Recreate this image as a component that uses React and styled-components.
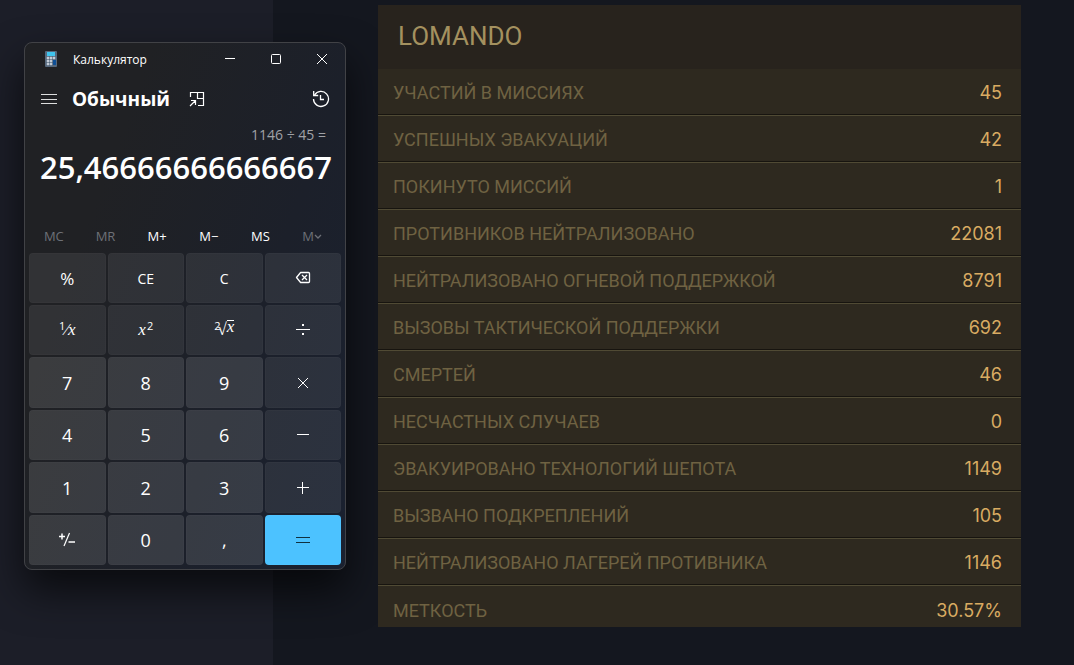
import React from 'react';
import styled, { createGlobalStyle } from 'styled-components';

const stats = [
  ['УЧАСТИЙ В МИССИЯХ', '45'],
  ['УСПЕШНЫХ ЭВАКУАЦИЙ', '42'],
  ['ПОКИНУТО МИССИЙ', '1'],
  ['ПРОТИВНИКОВ НЕЙТРАЛИЗОВАНО', '22081'],
  ['НЕЙТРАЛИЗОВАНО ОГНЕВОЙ ПОДДЕРЖКОЙ', '8791'],
  ['ВЫЗОВЫ ТАКТИЧЕСКОЙ ПОДДЕРЖКИ', '692'],
  ['СМЕРТЕЙ', '46'],
  ['НЕСЧАСТНЫХ СЛУЧАЕВ', '0'],
  ['ЭВАКУИРОВАНО ТЕХНОЛОГИЙ ШЕПОТА', '1149'],
  ['ВЫЗВАНО ПОДКРЕПЛЕНИЙ', '105'],
  ['НЕЙТРАЛИЗОВАНО ЛАГЕРЕЙ ПРОТИВНИКА', '1146'],
  ['МЕТКОСТЬ', '30.57%'],
];

const memoryKeys = [
  { label: 'MC', disabled: true },
  { label: 'MR', disabled: true },
  { label: 'M+' },
  { label: 'M−' },
  { label: 'MS' },
  { label: 'M', disabled: true, arrow: true },
];

const Glyph = ({ size = 16, children }) => (
  <svg width={size} height={size} viewBox={`0 0 ${size} ${size}`} fill="none" stroke="currentColor" aria-hidden="true">
    {children}
  </svg>
);

const SFormula = styled.span`
  display: flex;
  align-items: center;
  gap: ${({ $gap }) => $gap || '0'};
  font-family: 'Liberation Serif', serif;
  font-size: 17px;
  sup {
    align-self: flex-start;
    font-family: 'Open Sans', sans-serif;
    font-size: 11px;
    line-height: 12px;
  }
`;
const SRoot = styled.span`
  display: flex;
  margin-left: -3px;
  i {
    border-top: 1px solid currentColor;
    line-height: 12px;
  }
`;

const keys = [
  { name: 'Процент', label: '%' },
  { name: 'Очистить запись', label: 'CE', small: true },
  { name: 'Очистить', label: 'C', small: true },
  {
    name: 'Backspace',
    label: (
      <Glyph>
        <path d="M5.6 2.5h7.900a1 1 0 0 1 1 1v8a1 1 0 0 1-1 1H5.600L1.500 7.500z" strokeWidth="1.3" strokeLinejoin="round" />
        <path d="M7 5l5 5M12 5l-5 5" strokeWidth="1.3" />
      </Glyph>
    ),
  },
  {
    name: 'Обратное число',
    label: (
      <SFormula>
        <sup>1</sup>⁄<i>x</i>
      </SFormula>
    ),
  },
  {
    name: 'Квадрат',
    label: (
      <SFormula $gap="1px">
        <i>x</i>
        <sup>2</sup>
      </SFormula>
    ),
  },
  {
    name: 'Квадратный корень',
    label: (
      <SFormula>
        <sup>2</sup>
        <SRoot>
          √<i>x</i>
        </SRoot>
      </SFormula>
    ),
  },
  {
    name: 'Разделить',
    label: (
      <Glyph>
        <path d="M1 7.5h14" />
        <path d="M7 2h2v2H7zM7 11h2v2H7z" fill="currentColor" stroke="none" />
      </Glyph>
    ),
  },
  { name: '7', label: '7', digit: true },
  { name: '8', label: '8', digit: true },
  { name: '9', label: '9', digit: true },
  {
    name: 'Умножить',
    label: (
      <Glyph>
        <path d="M3 3l10 10M13 3L3 13" />
      </Glyph>
    ),
  },
  { name: '4', label: '4', digit: true },
  { name: '5', label: '5', digit: true },
  { name: '6', label: '6', digit: true },
  {
    name: 'Вычесть',
    label: (
      <Glyph>
        <path d="M2 7.5h12" />
      </Glyph>
    ),
  },
  { name: '1', label: '1', digit: true },
  { name: '2', label: '2', digit: true },
  { name: '3', label: '3', digit: true },
  {
    name: 'Сложить',
    label: (
      <Glyph>
        <path d="M2 7.5h12M7.5 2v12" />
      </Glyph>
    ),
  },
  {
    name: 'Сменить знак',
    digit: true,
    label: (
      <Glyph>
        <path d="M0 4.5h6M3 1.5v6" strokeWidth="1.5" />
        <path d="M10.5 1L5 14" strokeWidth="1.2" />
        <path d="M9.5 10h6.5" strokeWidth="1.5" />
      </Glyph>
    ),
  },
  { name: '0', label: '0', digit: true },
  { name: 'Запятая', label: ',', digit: true },
  {
    name: 'Равно',
    equals: true,
    label: (
      <Glyph>
        <path d="M1 5.5h14M1 10.5h14" />
      </Glyph>
    ),
  },
];

const Calculator = () => {
  return (
    <SWindow>
      <STitleBar>
        <svg width="12" height="16" viewBox="0 0 12 16" aria-hidden="true">
          <rect width="12" height="16" rx="1" fill="#56687c" />
          <rect x="2" y="1" width="8" height="4" fill="#3fc4ee" />
          <path
            d="M2 6h2v2H2zM5 6h2v2H5zM8 6h2v2H8zM2 9h2v2H2zM5 9h2v2H5zM2 12h2v2H2zM5 12h2v2H5z"
            fill="#cfd6df"
            stroke="#b3bdc9"
            strokeWidth="0.5"
          />
          <path d="M8 9h3v5H8z" fill="#0e4f96" />
        </svg>
        <STitle>Калькулятор</STitle>
        <SCaptionButton aria-label="Свернуть">
          <Glyph size={12}>
            <path d="M1 5.5h10" />
          </Glyph>
        </SCaptionButton>
        <SCaptionButton aria-label="Развернуть">
          <Glyph size={12}>
            <rect x="1.5" y="1.5" width="9" height="9" rx="1" />
          </Glyph>
        </SCaptionButton>
        <SCaptionButton aria-label="Закрыть">
          <Glyph size={12}>
            <path d="M1 1l10 10M11 1L1 11" />
          </Glyph>
        </SCaptionButton>
      </STitleBar>
      <SModeBar>
        <SIconButton aria-label="Меню">
          <Glyph>
            <path d="M0 3.5h16M0 8.5h16M0 12.5h16" opacity="0.85" />
          </Glyph>
        </SIconButton>
        <SMode>Обычный</SMode>
        <SIconButton aria-label="Поверх остальных окон">
          <Glyph>
            <path d="M1.5 6V1.5h13v13H9M8.5 1.5v6h6M1 15l5.5-5.5M2 9.5h4.500V14" strokeWidth="1.2" />
          </Glyph>
        </SIconButton>
        <SHistoryButton aria-label="Журнал">
          <Glyph size={18}>
            <path d="M2.5 5.2a7.5 7.5 0 1 1-1 3.8" strokeWidth="1.3" />
            <path d="M1.7 1v4.500h4.500M8.5 5v4.500H12" strokeWidth="1.3" />
          </Glyph>
        </SHistoryButton>
      </SModeBar>
      <SExpression>1146 ÷ 45 =</SExpression>
      <SResult>25,46666666666667</SResult>
      <SMemory>
        {memoryKeys.map(key => {
          return (
            <SMemoryKey key={key.label} disabled={key.disabled}>
              {key.label}
              {key.arrow && (
                <Glyph size={8}>
                  <path d="M1 3l3 3 3-3" strokeWidth="1.3" />
                </Glyph>
              )}
            </SMemoryKey>
          );
        })}
      </SMemory>
      <SKeypad>
        {keys.map(key => {
          return (
            <SKey key={key.name} aria-label={key.name} $digit={key.digit} $small={key.small} $equals={key.equals}>
              {key.label}
            </SKey>
          );
        })}
      </SKeypad>
    </SWindow>
  );
};

const Stats = () => {
  return (
    <SStats>
      <SPlayer>LOMANDO</SPlayer>
      <STable>
        <tbody>
          {stats.map(([label, value]) => {
            return (
              <tr key={label}>
                <SLabel scope="row">{label}</SLabel>
                <SValue>{value}</SValue>
              </tr>
            );
          })}
        </tbody>
      </STable>
    </SStats>
  );
};

const App = () => {
  return (
    <>
      <GlobalStyle />
      <SPage>
        <Calculator />
        <Stats />
      </SPage>
    </>
  );
};

export default App;

const GlobalStyle = createGlobalStyle`
  * {
    box-sizing: border-box;
  }
  body {
    margin: 0;
    background: #14171f;
    font-family: 'Open Sans', 'Noto Sans', sans-serif;
  }
  button {
    padding: 0;
    border: 0;
    background: none;
    color: inherit;
    font: inherit;
  }
  svg {
    display: block;
  }
`;
const SPage = styled.main`
  display: flex;
  align-items: flex-start;
  gap: 32px;
  min-height: 100vh;
  padding: 5px 53px 0 24px;
  background: linear-gradient(to right, #1c1e28 273px, #14171f 273px);
`;
const SWindow = styled.section`
  flex: 0 0 322px;
  margin-top: 37px;
  padding: 0 4px 4px;
  border: 1px solid #414246;
  border-radius: 8px;
  background: linear-gradient(110deg, #202124 25%, #1c202a 65%, #1a2130);
  box-shadow: 0 20px 40px rgba(0, 0, 0, 0.65);
  color: #fff;
`;
const STitleBar = styled.header`
  display: flex;
  align-items: center;
  height: 32px;
  margin-right: -4px;
  padding-left: 16px;
`;
const STitle = styled.span`
  flex: 1;
  margin-left: 16px;
  font-size: 12px;
`;
const SCaptionButton = styled.button`
  display: grid;
  place-items: center;
  width: 46px;
  height: 32px;
`;
const SModeBar = styled.div`
  display: flex;
  align-items: center;
  height: 48px;
  padding: 0 11px 0 12px;
`;
const SMode = styled.h1`
  margin: 0 19px 0 15px;
  font-size: 19px;
  font-weight: 700;
`;
const SIconButton = styled.button`
  display: grid;
  place-items: center;
`;
const SHistoryButton = styled(SIconButton)`
  margin-left: auto;
`;
const SExpression = styled.div`
  padding-right: 15px;
  color: #a0a2a7;
  font-size: 14px;
  line-height: 24px;
  text-align: right;
`;
const SResult = styled.output`
  display: block;
  padding-right: 9px;
  font-size: 31px;
  font-weight: 600;
  line-height: 40px;
  text-align: right;
`;
const SMemory = styled.div`
  display: grid;
  grid-template-columns: repeat(6, 1fr);
  margin: 32px 2px 1px 0;
`;
const SMemoryKey = styled.button`
  display: flex;
  align-items: center;
  justify-content: center;
  height: 33px;
  padding-right: 2px;
  font-size: 13px;
  &:disabled {
    color: #6d7077;
  }
`;
const SKeypad = styled.div`
  display: grid;
  grid-template-columns: repeat(4, 1fr);
  grid-template-rows: 50px 50px 51px 50px 51px 50px;
  gap: 2px;
`;
const SKey = styled.button`
  display: grid;
  place-items: center;
  border: 1px solid rgba(255, 255, 255, 0.02);
  border-radius: 4px;
  background: ${({ $equals, $digit }) =>
    $equals ? '#4cc2ff' : $digit ? 'rgba(255, 255, 255, 0.12)' : 'rgba(255, 255, 255, 0.08)'};
  color: ${({ $equals }) => ($equals ? '#10303f' : '#fff')};
  font-size: ${({ $small, $digit }) => ($small ? '14px' : $digit ? '18px' : '17px')};
`;
const SStats = styled.section`
  flex: 1;
  font-family: Roboto, 'Liberation Sans', sans-serif;
`;
const SPlayer = styled.h2`
  margin: 0;
  padding: 0 20px 2px;
  background: #28231d;
  color: #a4915f;
  font-size: 26px;
  font-weight: 400;
  line-height: 62px;
`;
const STable = styled.table`
  width: 100%;
  border-spacing: 0;
  background: #2e291f;
`;
const SLabel = styled.th`
  height: 47px;
  padding: 2px 0 0 15px;
  border-top: 1px solid #504a34;
  border-bottom: 1px solid #17140f;
  color: #6f6242;
  font-size: 18px;
  font-weight: 400;
  text-align: left;
  tr:first-child > & {
    height: 46px;
    border-top: 0;
  }
  tr:last-child > & {
    height: 42px;
    padding-top: 7px;
    border-bottom: 0;
  }
`;
const SValue = styled(SLabel).attrs({ as: 'td' })`
  padding-right: 19px;
  color: #d9ab62;
  font-family: Inter, 'Liberation Sans', sans-serif;
  text-align: right;
`;
